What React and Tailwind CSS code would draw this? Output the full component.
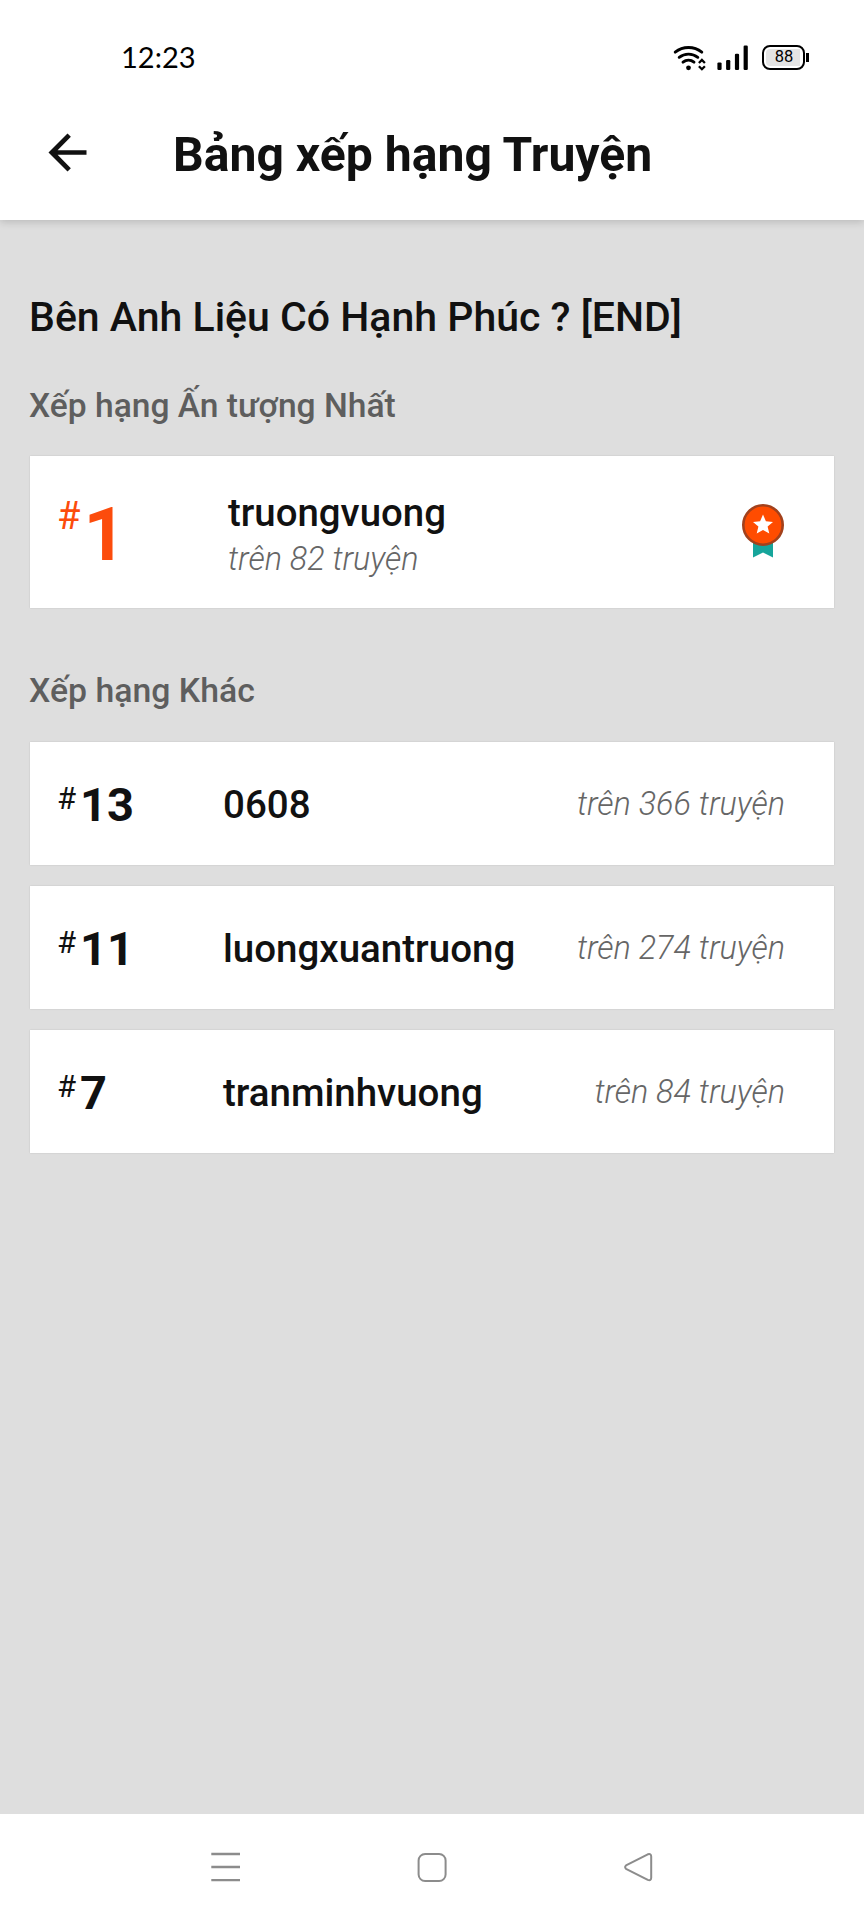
const otherRanks = [
  { rank: 13, name: '0608', total: 366 },
  { rank: 11, name: 'luongxuantruong', total: 274 },
  { rank: 7, name: 'tranminhvuong', total: 84 }
];

function WifiIcon() {
  return (
    <svg width="33" height="26" viewBox="0 0 33 26" fill="none" stroke="#000" strokeWidth="2.9" strokeLinecap="round">
      <path d="M2.2 7.2C10 .9 21 .9 28.8 7.2" />
      <path d="M6.2 12.3C11.6 8 19.4 8 24.8 12.3" />
      <path d="M10 17.2C13.2 14.6 17.8 14.6 21 17.2" />
      <circle cx="15.5" cy="22.8" r="2.4" fill="#000" stroke="none" />
      <path d="M25.9 18L28.9 15L31.9 18M25.9 21.2L28.9 24.2L31.9 21.2" strokeWidth="2.3" strokeLinecap="butt" />
    </svg>
  );
}

function SignalIcon() {
  return (
    <svg width="32" height="26" viewBox="0 0 32 26" fill="#000">
      <rect x="0.4" y="17.4" width="4.2" height="7.6" rx="1.2" />
      <rect x="9.1" y="15" width="4.2" height="10" rx="1.2" />
      <rect x="17.9" y="8.8" width="4.2" height="16.2" rx="1.2" />
      <rect x="26.6" y="0.6" width="4.2" height="24.4" rx="1.2" />
    </svg>
  );
}

function Battery({ level }) {
  return (
    <div className="flex items-center gap-px">
      <div className="flex h-[25px] w-[43px] rounded-[8px] border-2 border-black p-[2px]">
        <div className="flex w-[34px] items-center justify-center rounded-l-[4px] bg-[#e4e4e4] pl-[2px] text-[16.5px] leading-none text-black">
          {level}
        </div>
      </div>
      <div className="h-[9px] w-[3px] bg-black" />
    </div>
  );
}

function StatusBar() {
  return (
    <div className="flex h-[115px] items-center justify-between pl-[121px] pr-[55px]">
      <span className="mb-[2px] font-[Lato] text-[29px] leading-none text-black">12:23</span>
      <div className="flex items-center">
        <WifiIcon />
        <div className="ml-[11px]">
          <SignalIcon />
        </div>
        <div className="ml-[13px]">
          <Battery level={88} />
        </div>
      </div>
    </div>
  );
}

function Header() {
  return (
    <header className="z-10 h-[220px] shrink-0 bg-white shadow-[0_2px_8px_rgba(0,0,0,0.17)]">
      <StatusBar />
      <div className="flex h-[105px] items-center pb-[25px] pl-[39px]">
        <svg className="mb-[5px]" width="57" height="57" viewBox="0 0 24 24" fill="#111">
          <path d="M20 11.1H7.83l5.59-5.69L12 4l-8 8 8 8 1.41-1.41L7.83 12.9H20v-1.8z" />
        </svg>
        <h1 className="ml-[77px] text-[48.1px] font-bold leading-[56px]">Bảng xếp hạng Truyện</h1>
      </div>
    </header>
  );
}

function MedalIcon() {
  return (
    <svg width="44" height="56" viewBox="0 0 44 56">
      <path d="M12 36H32V54.6L22 49.6L12 54.6Z" fill="#16a59b" />
      <circle cx="22" cy="22" r="19.7" fill="#ff4c00" stroke="#a2411c" strokeWidth="2.6" />
      <path
        d="M22 11.5L24.9 18.2L32 18.9L26.6 23.6L28.3 30.6L22 27L15.7 30.6L17.4 23.6L12 18.9L19.1 18.2Z"
        fill="#fff"
      />
    </svg>
  );
}

function TopRankCard() {
  return (
    <div className="mt-[30px] flex h-[152px] items-start bg-white pl-[27px] pr-[49px] shadow-[0_0_1.5px_rgba(0,0,0,0.15)]">
      <div className="flex w-[171px] items-start text-[#fc4c0c]">
        <span className="mt-[40px] text-[38px] leading-[40px]">#</span>
        <span className="ml-[3px] mt-[42px] text-[74px] font-bold leading-[74px]">1</span>
      </div>
      <div className="mt-[35px] flex-1">
        <div className="text-[38.4px] font-medium leading-[44px]">truongvuong</div>
        <div className="mt-[4px] text-[32.4px] font-light italic leading-[40px] text-[#666]">trên 82 truyện</div>
      </div>
      <div className="mt-[47px]">
        <MedalIcon />
      </div>
    </div>
  );
}

function RankRow({ rank, name, total }) {
  return (
    <div className="flex h-[123px] items-center bg-white pl-[27px] pr-[49px] shadow-[0_0_1.5px_rgba(0,0,0,0.15)]">
      <div className="flex w-[166px] items-center">
        <span className="mb-[10px] text-[31px] leading-[36px]">#</span>
        <span className="ml-[4px] mt-[3px] text-[47px] font-bold leading-[56px]">{rank}</span>
      </div>
      <span className="mt-[3px] flex-1 text-[38.5px] font-medium leading-[44px]">{name}</span>
      <span className="mt-px text-[32.4px] font-light italic leading-[40px] text-[#666]">trên {total} truyện</span>
    </div>
  );
}

function NavBar() {
  return (
    <nav className="flex h-[106px] shrink-0 items-center justify-between bg-white px-[209px]">
      <svg width="32" height="32" viewBox="0 0 32 32" stroke="#8c8c8c" strokeWidth="2.3">
        <path d="M2.3 3H31M2.3 16H31M2.3 29.2H31" />
      </svg>
      <svg width="32" height="32" viewBox="0 0 32 32" fill="none" stroke="#8c8c8c" strokeWidth="2">
        <rect x="2.6" y="3" width="27" height="27" rx="6.5" />
      </svg>
      <svg width="32" height="32" viewBox="0 0 32 32" fill="none" stroke="#8c8c8c" strokeWidth="2" strokeLinejoin="round">
        <path d="M3 14.4L24.8 3.3Q28.2 2.2 28.2 5.4V26.8Q28.2 30 24.8 28.9L3 17.8Q1.2 16.1 3 14.4Z" />
      </svg>
    </nav>
  );
}

export default function App() {
  return (
    <div className="flex h-[1920px] w-[864px] flex-col overflow-hidden bg-[#dedede] font-[Roboto,sans-serif] text-[#111]">
      <Header />
      <main className="flex-1 px-[30px] pt-[72px]">
        <h2 className="-ml-px whitespace-nowrap text-[41px] font-medium leading-[50px]">
          Bên Anh Liệu Có Hạnh Phúc ? [END]
        </h2>
        <h3 className="-ml-px mt-[44px] text-[33.6px] font-medium leading-[40px] text-[#5e5e5e]">Xếp hạng Ấn tượng Nhất</h3>
        <TopRankCard />
        <h3 className="-ml-px mt-[63px] text-[33.8px] font-medium leading-[40px] text-[#5e5e5e]">Xếp hạng Khác</h3>
        <div className="mt-[31px] flex flex-col gap-[21px]">
          {otherRanks.map((item) => (
            <RankRow key={item.rank} {...item} />
          ))}
        </div>
      </main>
      <NavBar />
    </div>
  );
}
